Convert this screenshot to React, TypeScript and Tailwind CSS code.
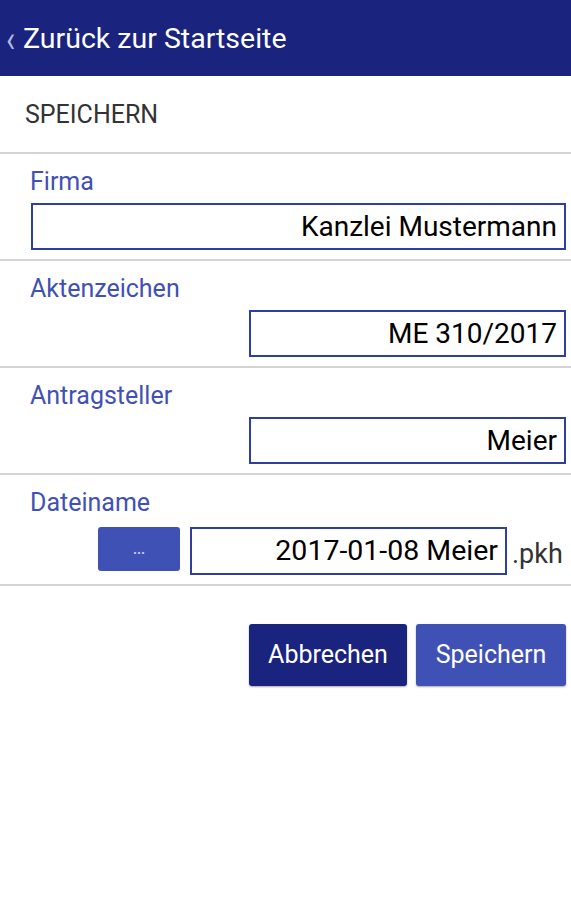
const FIELDS = [
  { label: 'Firma', value: 'Kanzlei Mustermann', width: 'w-[535px]' },
  { label: 'Aktenzeichen', value: 'ME 310/2017', width: 'w-[317px]' },
  { label: 'Antragsteller', value: 'Meier', width: 'w-[317px]' },
];

function Divider() {
  return <div className="h-[2px] w-full bg-[#d4d4d4]" />;
}

export default function App() {
  return (
    <div className="min-h-[900px] w-[571px] bg-white font-['Roboto',sans-serif]">
      <header className="flex h-[76px] items-center bg-[#1a237e] pl-[6px] pt-[2px] text-white">
        <span className="mr-[8px] scale-y-125 text-[30px] leading-none text-[#b3b8de]">&#8249;</span>
        <span className="text-[28.5px] leading-none">Zurück zur Startseite</span>
      </header>

      <div className="flex h-[76px] items-center pl-[25px] pt-[2px] text-[25px] text-[#333]">SPEICHERN</div>
      <Divider />

      {FIELDS.map((f) => (
        <div key={f.label}>
          <div className="pb-[9px] pl-[30px] pr-[5px] pt-[13px]">
            <div className="h-[30px] text-[25px] leading-[30px] text-[#3f51b5]">{f.label}</div>
            <div className="mt-[6px] flex justify-end">
              <div
                className={`${f.width} flex h-[47px] items-center justify-end border-2 border-[#2f3f9f] pr-[7px] text-[28px] text-black`}
              >
                {f.value}
              </div>
            </div>
          </div>
          <Divider />
        </div>
      ))}

      <div className="pb-[9px] pl-[30px] pt-[13px]">
        <div className="h-[30px] text-[25px] leading-[30px] text-[#3f51b5]">Dateiname</div>
        <div className="mt-[9px] flex items-start pl-[68px]">
          <button className="flex h-[44px] w-[82px] items-center justify-center rounded-[3px] bg-[#3f51b5] text-[14px] font-bold text-[#c5cae9]">
            ...
          </button>
          <div className="ml-[10px] flex h-[48px] w-[317px] items-center justify-end border-2 border-[#2f3f9f] pr-[7px] text-[28.5px] text-black">
            2017-01-08 Meier
          </div>
          <span className="ml-[5px] mt-[7px] text-[27px] text-[#333]">.pkh</span>
        </div>
      </div>
      <Divider />

      <div className="mt-[38px] flex justify-end gap-[9px] pr-[5px]">
        <button className="h-[62px] w-[158px] rounded-[3px] bg-[#1a237e] text-[25px] text-white shadow-[0_1px_2px_rgba(0,0,0,0.35)]">
          Abbrechen
        </button>
        <button className="h-[62px] w-[150px] rounded-[3px] bg-[#3f51b5] text-[25px] text-white shadow-[0_1px_2px_rgba(0,0,0,0.35)]">
          Speichern
        </button>
      </div>
    </div>
  );
}
